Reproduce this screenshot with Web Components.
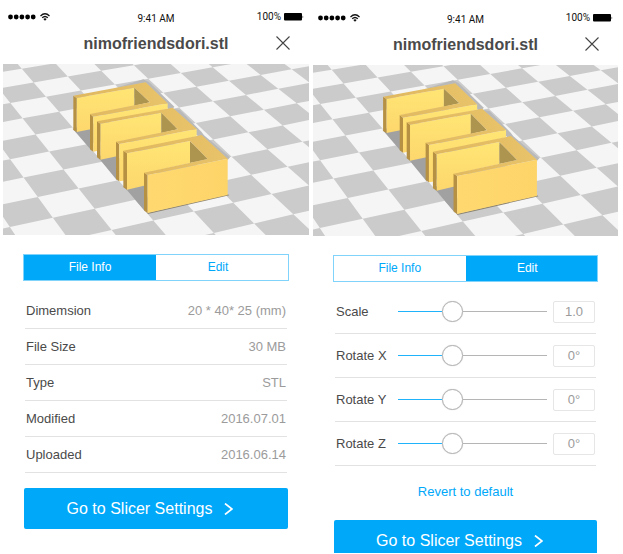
<!DOCTYPE html>
<html lang="en">
<head>
<meta charset="utf-8">
<meta name="viewport" content="width=device-width, initial-scale=1">
<title>nimofriendsdori.stl</title>
<style>
  body {
    margin: 0;
    background: #fff;
    color: #4a4a4a;
    font-family: "Liberation Sans", Arial, sans-serif;
    font-size: 13px;
    --accent: #00a8fa;
    --accent-edge: #80d4fb;
    --line: #e2e2e2;
    --muted: #9b9b9b;
  }
</style>
</head>
<body>
<slicer-app></slicer-app>

<script>
const define = (name, html, setup) => {
  const template = document.createElement('template');
  template.innerHTML = html;
  customElements.define(name, class extends HTMLElement {
    constructor() {
      super();
      this.attachShadow({ mode: 'open' }).append(template.content.cloneNode(true));
    }
    connectedCallback() {
      if (setup) setup(this, this.shadowRoot);
    }
  });
};

define('status-bar', `
  <style>
    :host { display: grid; grid-template-columns: 1fr auto 1fr; align-items: center; height: 34px; padding: 0 5px; color: #111; font: 10px/12px Roboto, sans-serif; }
    svg { display: block; }
    .signal, .power { display: flex; align-items: center; gap: 4px; }
    .power { justify-content: flex-end; gap: 3px; }
    .time { padding-top: 3px; }
  </style>
  <div class="signal">
    <svg width="28" height="6" viewBox="0 0 28 6" aria-hidden="true"><g fill="#000"><circle cx="2.5" cy="3" r="2.4"/><circle cx="8.2" cy="3" r="2.4"/><circle cx="13.9" cy="3" r="2.4"/><circle cx="19.6" cy="3" r="2.4"/><circle cx="25.2" cy="3" r="2.4"/></g></svg>
    <svg width="10" height="8" viewBox="0 0 10 8" aria-hidden="true"><g fill="none" stroke="#111" stroke-width="1.3"><path d="M.5 2.9Q5-1.3 9.5 2.9"/><path d="M2.2 4.8Q5 2.2 7.8 4.8"/></g><path d="M3.3 5.9Q5 4.5 6.7 5.9L5 7.7Z" fill="#111"/></svg>
  </div>
  <span class="time">9:41 AM</span>
  <div class="power">
    <span>100%</span>
    <svg width="20" height="8" viewBox="0 0 20 8" aria-hidden="true"><rect width="18" height="7.5" rx="1" fill="#000"/><path d="M18.6 2.4Q20 3.8 18.6 5.2Z" fill="#000"/></svg>
  </div>`);

define('title-bar', `
  <style>
    :host { display: grid; grid-template-columns: 1fr auto 1fr; align-items: start; height: 30px; }
    h1 { grid-column: 2; margin: 0; font-size: 16px; line-height: 20px; font-weight: bold; }
    button { justify-self: end; margin: 1px 18px 0 0; padding: 0; border: 0; background: none; }
    svg { display: block; }
  </style>
  <h1><slot></slot></h1>
  <button type="button" aria-label="Close">
    <svg width="16" height="16" viewBox="0 0 16 16"><path d="M1.5 1.5l13 13M14.5 1.5l-13 13" fill="none" stroke="#444" stroke-width="1.1"/></svg>
  </button>`);

/* Solves the perspective mapping that carries four floor vertices to their screen points. */
function perspective(pairs) {
  const m = [];
  for (const [u, v, x, y] of pairs) {
    m.push([u, v, 1, 0, 0, 0, -u * x, -v * x, x]);
    m.push([0, 0, 0, u, v, 1, -u * y, -v * y, y]);
  }
  for (let c = 0; c < 8; c++) {
    let p = c;
    for (let r = c; r < 8; r++) if (Math.abs(m[r][c]) > Math.abs(m[p][c])) p = r;
    [m[c], m[p]] = [m[p], m[c]];
    for (let r = 0; r < 8; r++) {
      if (r === c) continue;
      const f = m[r][c] / m[c][c];
      for (let k = c; k < 9; k++) m[r][k] -= f * m[c][k];
    }
  }
  const h = m.map((row, i) => row[8] / row[i]);
  return (u, v) => {
    const w = h[6] * u + h[7] * v + 1;
    return ((h[0] * u + h[1] * v + h[2]) / w).toFixed(1) + ',' + ((h[3] * u + h[4] * v + h[5]) / w).toFixed(1);
  };
}

define('stl-viewer', `
  <style>
    :host { display: block; }
    svg { display: block; width: 100%; height: 171px; background: #f5f5f5; }
  </style>
  <svg viewBox="0 0 918 513" preserveAspectRatio="none" role="img" aria-label="3D model preview">
    <defs>
      <linearGradient id="wall" x1="0" y1="0" x2="0" y2="1"><stop offset="0" stop-color="#ffe574"/><stop offset="1" stop-color="#fdd76d"/></linearGradient>
      <linearGradient id="front" x1="0" y1="0" x2="1" y2="0"><stop offset="0" stop-color="#ffd970"/><stop offset="1" stop-color="#fdd468"/></linearGradient>
      <linearGradient id="top" x1="0" y1="0" x2="1" y2="0"><stop offset="0" stop-color="#dfb75e"/><stop offset="1" stop-color="#e9c369"/></linearGradient>
    </defs>
    <path id="floor" fill="#cbcbcb"/>
    <g transform="translate(-9 -12)">
      <path fill="#b9b9b9" d="M346 84L430 58L447 66L523 140L518 146L540 150L604 215L612 226L690 292L683 300L590 225L503 145L437 68Z"/>
      <path fill="#a1a1a1" d="M218 206L275 198V272ZM291 288L352 280V362ZM370 378L436 366V455Z"/>

      <path fill="url(#wall)" d="M230 114L403 83V137L276 162V207L230 216Z"/>
      <path fill="#ad944f" d="M403 83L450 127L403 137Z"/>
      <path fill="#b69043" d="M220 107L230 114V216L220 210ZM270 162L280 170V275L270 268Z"/>
      <path fill="url(#wall)" d="M280 170L503 130V146L300 190V271L280 275Z"/>
      <path fill="url(#top)" d="M220 107L437 67L503 130L280 170L270 162L450 127L403 83L230 114Z"/>

      <path fill="url(#wall)" d="M301 191L484 158V219L354 245V288L301 299Z"/>
      <path fill="#ad944f" d="M484 158L533 208L484 219Z"/>
      <path fill="#b69043" d="M291 184L301 191V299L291 292ZM348 245L358 252V364L348 357Z"/>
      <path fill="url(#wall)" d="M358 252L590 207V229L378 276V361L358 364Z"/>
      <path fill="url(#top)" d="M291 184L518 143L590 207L358 252L348 245L533 208L484 158L301 191Z"/>

      <path fill="url(#wall)" d="M381 280L570 243V309L438 338V376L381 389Z"/>
      <path fill="#ad944f" d="M570 243L623 297L570 309Z"/>
      <path fill="#b69043" d="M370 272L381 280V389L370 382ZM432 338L443 345V460L432 451Z"/>
      <path fill="#8a8272" d="M443 458L683 403L688 406L443 462Z"/>
      <path fill="url(#front)" d="M443 345L683 296V405L443 459Z"/>
      <path fill="url(#top)" d="M370 272L605 225L683 296L443 345L432 338L623 297L570 243L381 280Z"/>
    </g>
  </svg>`, (host, root) => {
  const at = perspective([[0, 0, 22, 117], [0, 6, 275, 434], [7, 1, 773, 33], [4, 8, 871, 451]]);
  let d = '';
  for (let u = -4; u < 11; u++) {
    for (let v = -5; v < 12; v++) {
      if ((u + v) & 1) d += `M${at(u, v)}L${at(u + 1, v)}L${at(u + 1, v + 1)}L${at(u, v + 1)}Z`;
    }
  }
  root.getElementById('floor').setAttribute('d', d);
});

define('tab-switch', `
  <style>
    :host { display: block; margin: 19px 20px 0; }
    div { display: grid; grid-template-columns: 1fr 1fr; border: 1px solid var(--accent-edge); }
    button { height: 25px; padding: 0; border: 0; background: #fff; color: var(--accent); font: inherit; font-size: 12px; line-height: 25px; }
    button + button { padding-right: 8px; }
    button[aria-selected="true"] { background: var(--accent); color: #fff; }
  </style>
  <div role="tablist">
    <button type="button" role="tab">File Info</button>
    <button type="button" role="tab">Edit</button>
  </div>`, (host, root) => {
  const tabs = [...root.querySelectorAll('button')];
  const select = (i) => tabs.forEach((t, n) => t.setAttribute('aria-selected', String(n === i)));
  tabs.forEach((t, i) => { t.onclick = () => select(i); });
  select(Number(host.getAttribute('selected')));
});

define('file-info', `
  <style>
    :host { display: block; margin: 12px 22px 0; }
    table { width: 100%; border-collapse: separate; border-spacing: 0; }
    th, td { height: 35px; padding: 0 1px; border-bottom: 1px solid var(--line); font-weight: normal; text-align: left; }
    td { text-align: right; color: var(--muted); }
  </style>
  <table>
    <tr><th scope="row">Dimemsion</th><td>20 * 40* 25 (mm)</td></tr>
    <tr><th scope="row">File Size</th><td>30 MB</td></tr>
    <tr><th scope="row">Type</th><td>STL</td></tr>
    <tr><th scope="row">Modified</th><td>2016.07.01</td></tr>
    <tr><th scope="row">Uploaded</th><td>2016.06.14</td></tr>
  </table>`);

define('slider-row', `
  <style>
    :host { display: grid; grid-template-columns: 62px 1fr 42px; align-items: center; height: 43px; margin: 0 22px; padding: 0 1px; border-bottom: 1px solid var(--line); }
    .range { appearance: none; width: auto; min-width: 0; height: 21px; margin: 0 6px 0 0;
      background: linear-gradient(#1fb3fb, #1fb3fb) 0 10px / var(--fill) 1px no-repeat, linear-gradient(#b5b5b5, #b5b5b5) 0 10px / 100% 1px no-repeat; }
    .range::-webkit-slider-thumb { appearance: none; box-sizing: border-box; width: 21px; height: 21px; border: 1px solid #b5b5b5; border-radius: 50%; background: #fff; box-shadow: 0 0 1px #bbb; }
    .value { box-sizing: border-box; width: 100%; height: 22px; padding: 0; border: 1px solid #e6e6e6; border-radius: 2px; color: var(--muted); font: inherit; text-align: center; }
  </style>
  <label for="range"><slot></slot></label>
  <input class="range" id="range" type="range" min="0" max="100" value="34">
  <input class="value" type="text">`, (host, root) => {
  const range = root.querySelector('.range');
  const fill = () => range.style.setProperty('--fill', range.value + '%');
  range.addEventListener('input', fill);
  fill();
  const value = root.querySelector('.value');
  value.value = host.getAttribute('value');
  value.setAttribute('aria-label', host.textContent + ' value');
});

define('text-button', `
  <style>
    :host { display: flex; justify-content: center; padding: 16px 0 18px; }
    button { padding: 0; border: 0; background: none; color: var(--accent); font: inherit; line-height: 20px; }
  </style>
  <button type="button"><slot></slot></button>`);

define('primary-button', `
  <style>
    :host { display: block; margin: 0 21px; }
    button { display: flex; align-items: center; justify-content: center; gap: 12px; width: 100%; height: 41px; padding: 0 12px 0 0; border: 0; border-radius: 2px; background: var(--accent); color: #fff; font: inherit; font-size: 16px; line-height: 20px; }
  </style>
  <button type="button">
    <slot></slot>
    <svg width="9" height="12" viewBox="0 0 9 12" aria-hidden="true"><path d="M1 .5l7 5.5L1 11.5" fill="none" stroke="#fff" stroke-width="1.7"/></svg>
  </button>`);

define('phone-screen', `
  <style>:host { display: block; min-width: 0; }</style>
  <status-bar></status-bar>
  <title-bar>nimofriendsdori.stl</title-bar>
  <stl-viewer></stl-viewer>
  <slot></slot>`);

define('slicer-app', `
  <style>
    :host { display: grid; grid-template-columns: 306fr 305fr; gap: 4px; box-sizing: border-box; height: calc(100vh - 1px); padding: 0 5px 0 3px; overflow: hidden; }
    .edit { padding-top: 1px; }
    .sliders { padding-top: 8px; }
    .info primary-button { margin-top: 15px; }
  </style>
  <phone-screen class="info">
    <tab-switch selected="0"></tab-switch>
    <file-info></file-info>
    <primary-button>Go to Slicer Settings</primary-button>
  </phone-screen>
  <phone-screen class="edit">
    <tab-switch selected="1"></tab-switch>
    <div class="sliders">
      <slider-row value="1.0">Scale</slider-row>
      <slider-row value="0°">Rotate X</slider-row>
      <slider-row value="0°">Rotate Y</slider-row>
      <slider-row value="0°">Rotate Z</slider-row>
    </div>
    <text-button>Revert to default</text-button>
    <primary-button>Go to Slicer Settings</primary-button>
  </phone-screen>`);
</script>
</body>
</html>
